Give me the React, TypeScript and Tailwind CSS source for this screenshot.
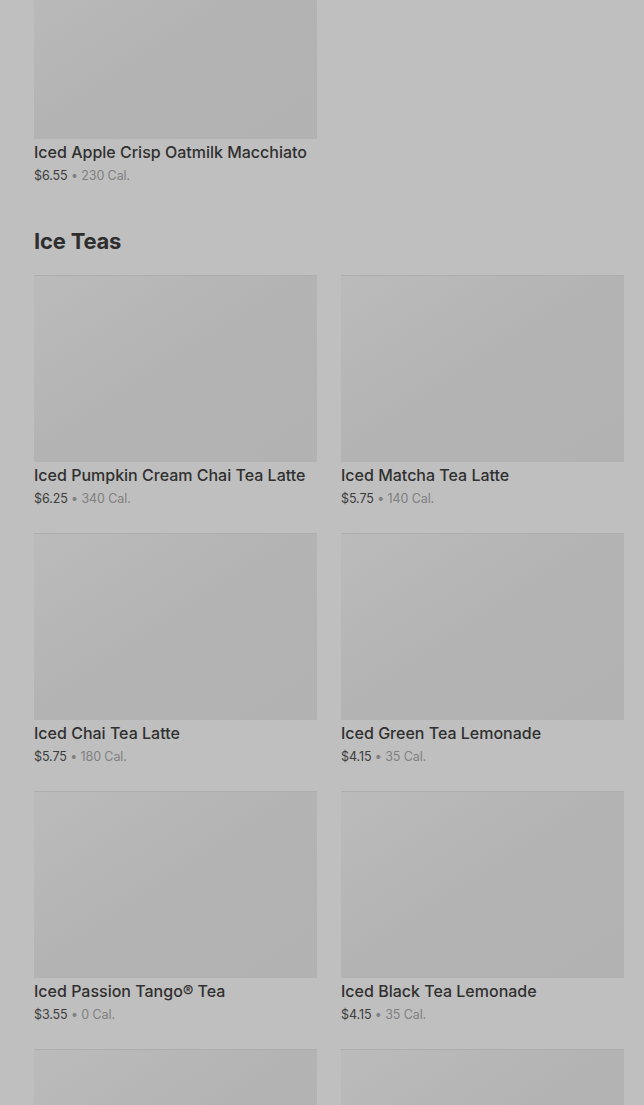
const iceTeas = [
  { name: 'Iced Pumpkin Cream Chai Tea Latte', price: '$6.25', cal: '340 Cal.' },
  { name: 'Iced Matcha Tea Latte', price: '$5.75', cal: '140 Cal.' },
  { name: 'Iced Chai Tea Latte', price: '$5.75', cal: '180 Cal.' },
  { name: 'Iced Green Tea Lemonade', price: '$4.15', cal: '35 Cal.' },
  { name: 'Iced Passion Tango® Tea', price: '$3.55', cal: '0 Cal.' },
  { name: 'Iced Black Tea Lemonade', price: '$4.15', cal: '35 Cal.' },
  { name: '', price: '', cal: '' },
  { name: '', price: '', cal: '' },
];

type Item = { name: string; price: string; cal: string };

function MenuCard({ item }: { item: Item }) {
  return (
    <div className="flex flex-col">
      <div className="h-[187px] w-full border-t border-[#adadad] bg-gradient-to-br from-[#bbbbbb] via-[#b3b3b3] to-[#b2b2b2]" />
      {item.name && (
        <>
          <div className="mt-[3px] text-[16px] leading-[20px] font-medium text-[#303030] truncate">{item.name}</div>
          <div className="mt-[5px] text-[12.5px] leading-[18px] tracking-[-0.1px]">
            <span className="text-[#3c3c3c]">{item.price}</span>
            <span className="text-[#808080]"> • {item.cal}</span>
          </div>
        </>
      )}
    </div>
  );
}

export default function App() {
  return (
    <div
      className="h-[1105px] overflow-hidden bg-[#bfbfbf] pl-[34px] pr-[20px]"
      style={{ fontFamily: 'Inter, "Noto Sans", sans-serif' }}
    >
      <div className="-mt-[48px] grid grid-cols-2 gap-x-[24px]">
        <MenuCard item={{ name: 'Iced Apple Crisp Oatmilk Macchiato', price: '$6.55', cal: '230 Cal.' }} />
      </div>

      <h2 className="mt-[42px] text-[22px] leading-[28px] font-bold tracking-[-0.2px] text-[#2e2e2e]">Ice Teas</h2>

      <div className="mt-[20px] grid grid-cols-2 gap-x-[24px] gap-y-[25px]">
        {iceTeas.map((item, i) => (
          <MenuCard key={i} item={item} />
        ))}
      </div>
    </div>
  );
}
